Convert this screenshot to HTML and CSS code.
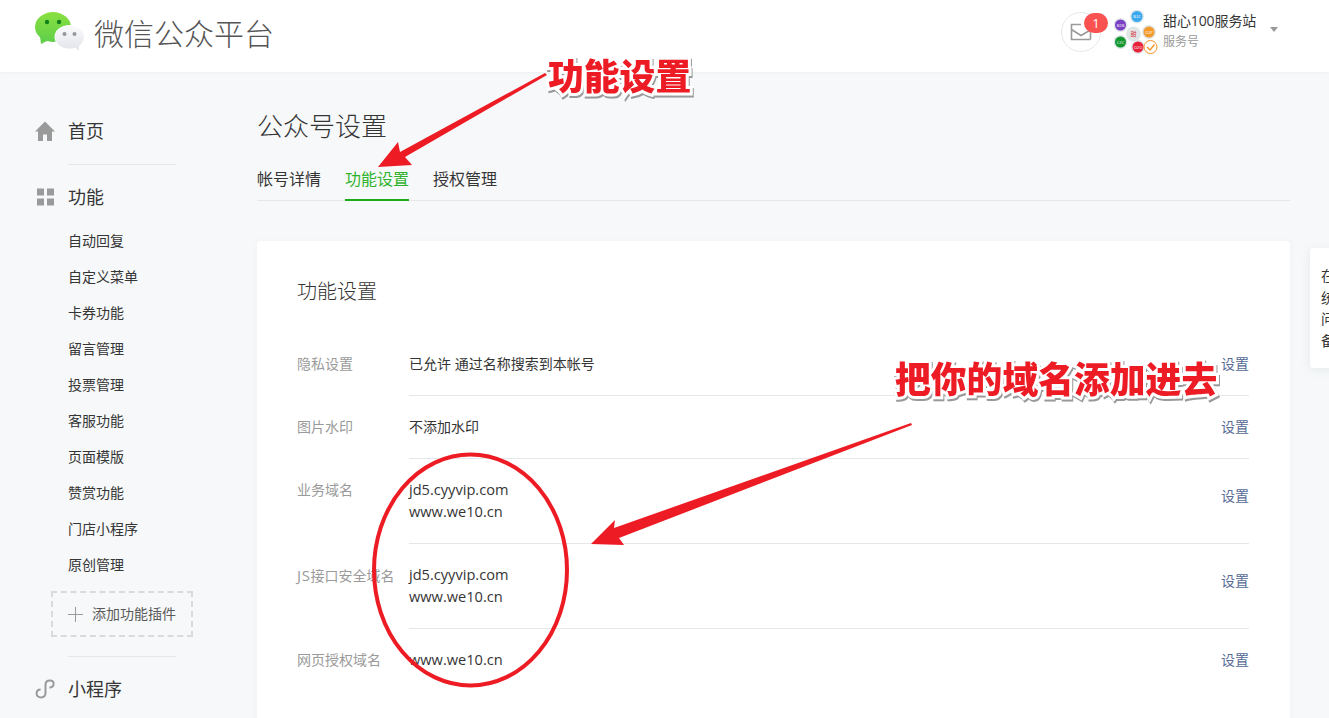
FILE: index.html
```html
<!DOCTYPE html>
<html>
	<head>
		<meta charset="utf-8">
		<title>公众号设置</title>
		<link rel="stylesheet" href="styles.css">
	</head>
	<body>
		<div class="header">
			<svg class="logo" width="50" height="40" viewBox="0 0 50 40">
				<defs>
					<linearGradient id="gGreen" x1="0" y1="0" x2="0" y2="1">
						<stop offset="0" stop-color="#8ae03f"/>
						<stop offset="1" stop-color="#5fcf4a"/>
					</linearGradient>
					<linearGradient id="gWhite" x1="0" y1="0" x2="0" y2="1">
						<stop offset="0" stop-color="#fbfbfc"/>
						<stop offset="1" stop-color="#e4e6ec"/>
					</linearGradient>
				</defs>
				<ellipse cx="18" cy="15" rx="18" ry="15" fill="url(#gGreen)"/>
				<path d="M5 24 L6 32 L14 28 Z" fill="#62d04a"/>
				<circle cx="12" cy="10" r="2.2" fill="#12801d"/>
				<circle cx="24" cy="10" r="2.2" fill="#12801d"/>
				<ellipse cx="34.5" cy="25" rx="15" ry="12" fill="#fff"/>
				<ellipse cx="34.5" cy="25" rx="14.5" ry="11.5" fill="url(#gWhite)"/>
				<path d="M38 34 L44 39 L44 32 Z" fill="#e6e8ed"/>
				<circle cx="29.5" cy="22" r="2" fill="#94989c"/>
				<circle cx="39.5" cy="22" r="2" fill="#94989c"/>
			</svg>
			<div class="brand">微信公众平台</div>
			<div class="account">
				<div class="mail">
					<svg width="24" height="20" viewBox="0 0 24 20">
						<path d="M21.5 17.5 H2.5 V2.5 H12 M2.5 7.5 L12 13.5 L21.5 8 V17.5" fill="none" stroke="#9a9a9a" stroke-width="1.6"/>
					</svg>
					<span class="badge">1</span>
				</div>
				<svg class="avatar" width="44" height="44" viewBox="0 0 44 44">
					<g class="avatarLabels">
						<circle cx="23" cy="6.5" r="7" fill="#dfe6e8"/>
						<circle cx="23" cy="6.5" r="5.5" fill="#3aa8ee"/>
						<circle cx="6.5" cy="15" r="7" fill="#dfe6e8"/>
						<circle cx="6.5" cy="15" r="5.5" fill="#7b3fc4"/>
						<circle cx="35" cy="22" r="7" fill="#dfe6e8"/>
						<circle cx="35" cy="22" r="5.5" fill="#f39a2b"/>
						<circle cx="6.5" cy="32" r="7" fill="#dfe6e8"/>
						<circle cx="6.5" cy="32" r="5.5" fill="#12962e"/>
						<circle cx="24" cy="37" r="7" fill="#dfe6e8"/>
						<circle cx="24" cy="37" r="5.5" fill="#e8213a"/>
						<circle cx="19.5" cy="24" r="7.5" fill="#dfe6e8"/>
						<text x="23" y="8">B2C</text>
						<text x="6.5" y="16.5">B2B</text>
						<text x="35" y="23.5">O2P</text>
						<text x="6.5" y="33.5">C2C</text>
						<text x="24" y="38.5">O2O</text>
						<text x="19.5" y="26" class="avatarCore">甜</text>
					</g>
					<circle cx="36.5" cy="37" r="6.5" fill="#fff" stroke="#f4922a" stroke-width="1"/>
					<path d="M33 37 L36 40 L40.5 34.5" fill="none" stroke="#f4922a" stroke-width="1.3"/>
				</svg>
				<div class="accountText">
					<div class="accountName">甜心100服务站</div>
					<div class="accountType">服务号</div>
				</div>
				<div class="caret"></div>
			</div>
		</div>

		<div class="page">
			<!--Left menu-->
			<div class="side">
				<div class="navMain">
					<svg class="navIcon" width="20" height="20" viewBox="0 0 20 20">
						<path d="M10 0.5 L20 10.5 H17 V20 H12 V13.5 H8 V20 H3 V10.5 H0 Z" fill="#9a9a9a"/>
					</svg>
					<span>首页</span>
				</div>
				<div class="navLine"></div>
				<div class="navMain">
					<svg class="navIcon" width="20" height="20" viewBox="0 0 20 20">
						<path d="M2 1.5 H9 V8.5 H2 Z M12 1.5 H19 V8.5 H12 Z M2 11.5 H9 V18.5 H2 Z M12 11.5 H19 V18.5 H12 Z" fill="#9a9a9a"/>
					</svg>
					<span>功能</span>
				</div>
				<ul class="navSub">
					<li>自动回复</li>
					<li>自定义菜单</li>
					<li>卡券功能</li>
					<li>留言管理</li>
					<li>投票管理</li>
					<li>客服功能</li>
					<li>页面模版</li>
					<li>赞赏功能</li>
					<li>门店小程序</li>
					<li>原创管理</li>
				</ul>
				<div class="addPlugin">
					<svg width="15" height="15" viewBox="0 0 15 15">
						<path d="M7.5 0 V15 M0 7.5 H15" stroke="#9a9a9a" stroke-width="1"/>
					</svg>
					<span>添加功能插件</span>
				</div>
				<div class="navLine"></div>
				<div class="navMain">
					<svg class="navIcon" width="20" height="20" viewBox="0 0 20 20">
						<path d="M10.5 6 C10.5 2.5 13 1.6 15 1.6 C17.2 1.6 18.6 3.2 18.6 5 C18.6 7.4 16.6 8.6 14.4 8.4 M10.5 6 V13.5 C10.5 16.5 8.6 18.4 6 18.4 C3.6 18.4 1.6 16.8 1.6 14.4 C1.6 12.2 3.2 10.6 5.6 10.6" fill="none" stroke="#9a9a9a" stroke-width="2"/>
					</svg>
					<span>小程序</span>
				</div>
			</div>

			<div class="main">
				<h1 class="pageTitle">公众号设置</h1>
				<div class="tabs">
					<div class="tab">帐号详情</div>
					<div class="tab current">功能设置</div>
					<div class="tab">授权管理</div>
				</div>

				<div class="card">
					<h2 class="cardTitle">功能设置</h2>
					<div class="row">
						<div class="rowLabel">隐私设置</div>
						<div class="rowBody">
							<div class="rowValue">已允许 通过名称搜索到本帐号</div>
							<a class="rowLink">设置</a>
						</div>
					</div>
					<div class="row">
						<div class="rowLabel">图片水印</div>
						<div class="rowBody">
							<div class="rowValue">不添加水印</div>
							<a class="rowLink">设置</a>
						</div>
					</div>
					<div class="row tall">
						<div class="rowLabel">业务域名</div>
						<div class="rowBody">
							<div class="rowValue domain">jd5.cyyvip.com<br>www.we10.cn</div>
							<a class="rowLink">设置</a>
						</div>
					</div>
					<div class="row tall">
						<div class="rowLabel"><span class="latin">JS</span>接口安全域名</div>
						<div class="rowBody">
							<div class="rowValue domain">jd5.cyyvip.com<br>www.we10.cn</div>
							<a class="rowLink">设置</a>
						</div>
					</div>
					<div class="row last">
						<div class="rowLabel">网页授权域名</div>
						<div class="rowBody">
							<div class="rowValue domain">www.we10.cn</div>
							<a class="rowLink">设置</a>
						</div>
					</div>
				</div>
			</div>
		</div>

		<!--Floating tip on the right edge-->
		<div class="floatTip">在<br>统<br>问<br>备</div>

		<!--Red marks drawn over the screenshot-->
		<svg class="marks" width="1329" height="718" viewBox="0 0 1329 718">
			<path d="M547 75 L405 157 L412 165 L378 167 L398 142 L400 152 L545 73 Z" fill="#ed1c24"/>
			<path d="M912 425 L619 538 L624 545 L591 544 L615 520 L614 528 L911 423 Z" fill="#ed1c24"/>
			<ellipse cx="470.5" cy="570" rx="96.5" ry="115.5" fill="none" stroke="#ed1c24" stroke-width="4"/>
		</svg>
		<div class="note noteTabs">功能设置</div>
		<div class="note noteDomain">把你的域名添加进去</div>
	</body>
</html>
```

FILE: styles.css
```css
html, body {
	height: 718px;
	overflow: hidden;
}

body {
	margin: 0;
	position: relative;
	background-color: #f6f8f9;
	color: #353535;
	font-family: "Open Sans", "Noto Sans CJK SC", sans-serif;
	font-size: 14px;
}

/*Top bar*/
.header {
	height: 64px;
	padding: 0 51px 8px 35px;
	display: flex;
	align-items: center;
	background-color: #fff;
	box-shadow: 0 1px 3px rgba(0, 0, 0, 0.04);
}

.brand {
	margin-left: 9px;
	font-size: 30px;
	font-weight: 300;
	color: #555;
}

.account {
	margin-left: auto;
	display: flex;
	align-items: center;
}

.mail {
	position: relative;
	width: 38px;
	height: 38px;
	border: 1px solid #e4e8eb;
	border-radius: 50%;
	display: flex;
	align-items: center;
	justify-content: center;
}

.badge {
	position: absolute;
	left: 22px;
	top: 0;
	width: 24px;
	height: 20px;
	border-radius: 10px;
	background-color: #fa5151;
	color: #fff;
	font-size: 13px;
	line-height: 20px;
	text-align: center;
}

.avatar {
	margin-left: 13px;
}

.avatarLabels text {
	font-family: "Open Sans", sans-serif;
	font-size: 4px;
	fill: #fff;
	text-anchor: middle;
}

.avatarLabels .avatarCore {
	font-family: "Noto Sans CJK SC", sans-serif;
	font-size: 6px;
	fill: #d9323c;
}

.accountText {
	margin-left: 5px;
	width: 95px;
	padding-bottom: 2px;
}

.accountName {
	line-height: 20px;
	white-space: nowrap;
	letter-spacing: -0.1px;
}

.accountType {
	margin-top: 2px;
	font-size: 12px;
	line-height: 18px;
	color: #9a9a9a;
}

.caret {
	margin: 0 0 6px 12px;
	width: 0;
	height: 0;
	border-left: 4.5px solid transparent;
	border-right: 4.5px solid transparent;
	border-top: 5px solid #9a9a9a;
}

/*Page columns*/
.page {
	display: flex;
}

.side {
	width: 257px;
	flex: none;
	padding-top: 37px;
}

.navMain {
	height: 44px;
	padding-left: 35px;
	display: flex;
	align-items: center;
	font-size: 18px;
	color: #353535;
}

.navMain span {
	margin-top: -2px;
}

.navIcon {
	margin-right: 13px;
}

.navLine {
	width: 108px;
	height: 1px;
	margin: 11px 0 10px 68px;
	background-color: #e4e8eb;
}

.navSub {
	list-style: none;
	margin: 4px 0 0;
	padding: 0 0 0 68px;
}

.navSub li {
	line-height: 36px;
}

.addPlugin {
	box-sizing: border-box;
	width: 142px;
	height: 46px;
	margin: 8px 0 19px 51px;
	padding-left: 15px;
	border: 2px dashed #d9dadc;
	display: flex;
	align-items: center;
	gap: 9px;
	color: #5a5a5a;
}

.addPlugin span {
	margin-top: -2px;
}

.addPlugin + .navLine {
	margin-top: 19px;
}

.main {
	width: 1033px;
	flex: none;
	padding-top: 37px;
}

.pageTitle {
	margin: 0;
	font-size: 26px;
	font-weight: 300;
	line-height: 34px;
}

.tabs {
	margin-top: 20px;
	display: flex;
	gap: 24px;
	border-bottom: 1px solid #e4e8eb;
}

.tab {
	font-size: 16px;
	line-height: 32px;
	padding-bottom: 4px;
	border-bottom: 2px solid transparent;
	margin-bottom: -1px;
}

.tab.current {
	color: #2fb32e;
	border-bottom-color: #1aad19;
}

/*Settings card*/
.card {
	margin-top: 40px;
	padding: 37px 41px 40px 40px;
	background-color: #fff;
	border-radius: 4px;
	box-shadow: 0 1px 6px rgba(150, 160, 170, 0.08);
}

.cardTitle {
	margin: 0 0 27px;
	font-size: 20px;
	font-weight: 300;
	line-height: 28px;
}

.row {
	display: flex;
}

.rowLabel {
	width: 112px;
	flex: none;
	padding-top: 20px;
	line-height: 22px;
	color: #9a9a9a;
	white-space: nowrap;
}

.latin {
	font-size: 15px;
	letter-spacing: 0.6px;
}

.rowBody {
	flex: 1;
	display: flex;
	justify-content: space-between;
	padding: 20px 0 20px;
	border-bottom: 1px solid #e4e8eb;
	line-height: 22px;
}

.domain {
	font-size: 14.6px;
	margin: -1px 0 1px;
}

.row.last .rowBody {
	border-bottom: none;
}

.rowLink {
	color: #576b95;
}

.row.tall .rowLink {
	padding-top: 6px;
}

.floatTip {
	position: absolute;
	left: 1310px;
	top: 248px;
	width: 200px;
	box-sizing: border-box;
	height: 120px;
	padding: 17px 11px;
	background-color: #fff;
	border-radius: 3px;
	line-height: 21.7px;
	box-shadow: 0 2px 10px rgba(150, 160, 170, 0.15);
}

/*Annotation layer*/
.marks {
	position: absolute;
	left: 0;
	top: 0;
}

.note {
	position: absolute;
	font-family: "Noto Sans CJK SC", sans-serif;
	font-size: 35.8px;
	font-weight: 900;
	line-height: 40px;
	white-space: nowrap;
	color: #ed1c24;
	-webkit-text-stroke: 6px #fff;
	paint-order: stroke fill;
	filter: drop-shadow(1px 2px 0 #999);
}

.noteTabs {
	left: 548px;
	top: 54px;
}

.noteDomain {
	left: 895px;
	top: 357px;
}
```
